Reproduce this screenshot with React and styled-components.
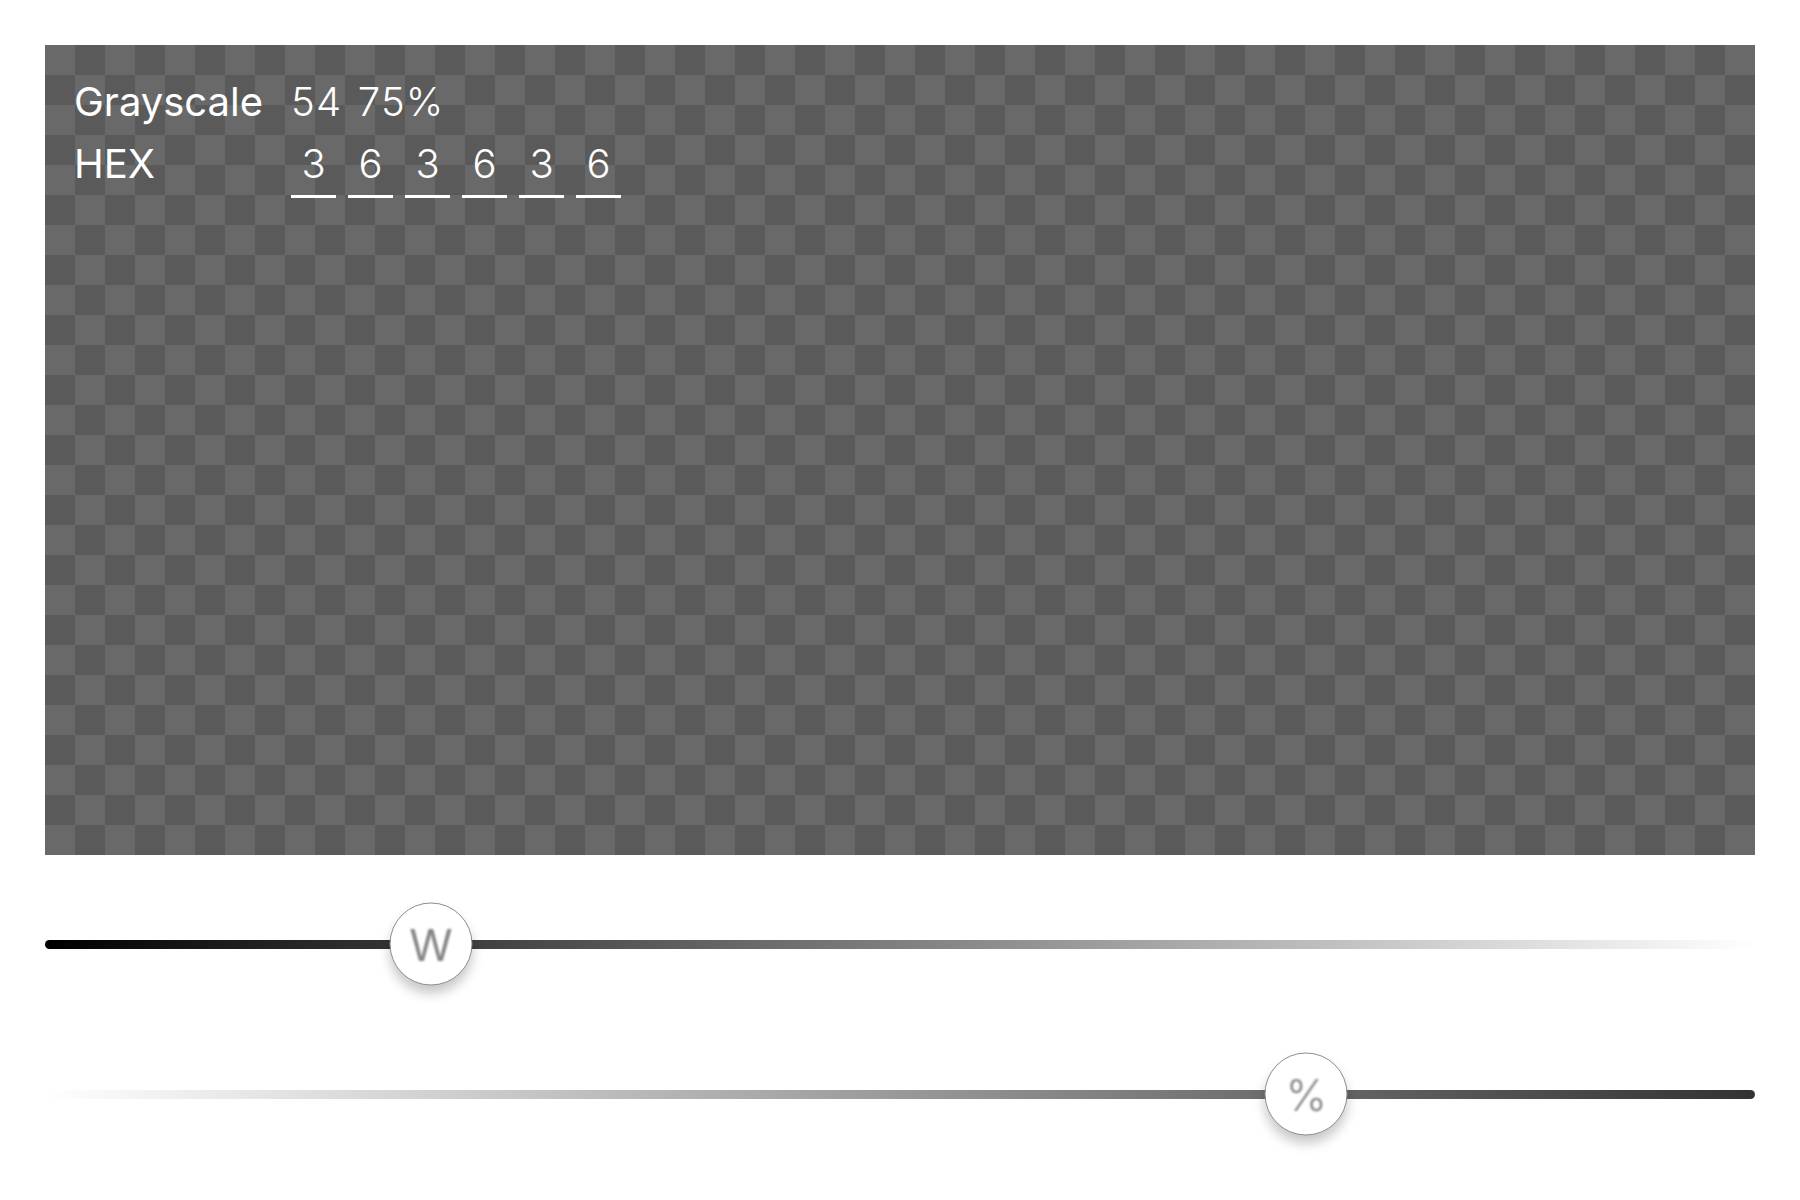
import React from 'react'
import styled, { createGlobalStyle } from 'styled-components'

const GlobalStyle = createGlobalStyle`
    html, body {
        margin: 0;
        padding: 0;
        background: #ffffff;
    }
    body {
        font-family: Inter, "Liberation Sans", sans-serif;
    }
`

const hexDigits = ['3', '6', '3', '6', '3', '6']

function Slider({ value, glyph, gradient, weight }) {
    return (
        <SliderRow>
            <Track gradient={gradient} />
            <Thumb style={{ left: `${value * 100}%` }}>
                <Glyph weight={weight}>{glyph}</Glyph>
            </Thumb>
        </SliderRow>
    )
}

function App() {
    return (
        <Page>
            <GlobalStyle />
            <Preview>
                <Info>
                    <Label>Grayscale</Label>
                    <Value>54 75%</Value>
                    <Label>HEX</Label>
                    <HexFields>
                        {hexDigits.map((d, i) => (
                            <HexCell key={i}>{d}</HexCell>
                        ))}
                    </HexFields>
                </Info>
            </Preview>
            <Sliders>
                <Slider
                    value={0.2257}
                    glyph="W"
                    weight={400}
                    gradient="linear-gradient(to right, #000000, #ffffff)"
                />
                <Slider
                    value={0.7377}
                    glyph="%"
                    weight={300}
                    gradient="linear-gradient(to right, #ffffff, #333333)"
                />
            </Sliders>
        </Page>
    )
}
export default App

const Page = styled.div`
    padding: 45px;
    width: 1710px;
`
const Preview = styled.div`
    height: 810px;
    background: repeating-conic-gradient(#5a5a5a 0 25%, #696969 0 50%) 0 0 / 60px 60px;
    padding: 33px 0 0 29px;
    box-sizing: border-box;
`
const Info = styled.div`
    display: grid;
    grid-template-columns: 217px auto;
    grid-template-rows: 48px auto;
    row-gap: 14px;
    justify-content: start;
    color: #ffffff;
    font-size: 40px;
    line-height: 48px;
`
const Label = styled.div`
    font-weight: 400;
`
const Value = styled.div`
    font-weight: 300;
    letter-spacing: 1.2px;
    word-spacing: 3px;
`
const HexFields = styled.div`
    display: flex;
    gap: 12px;
`
const HexCell = styled.div`
    width: 45px;
    text-align: center;
    font-weight: 300;
    padding-bottom: 7px;
    border-bottom: 3px solid #ffffff;
`
const Sliders = styled.div`
    margin-top: 14px;
    display: flex;
    flex-direction: column;
`
const SliderRow = styled.div`
    position: relative;
    height: 150px;
    display: flex;
    align-items: center;
`
const Track = styled.div`
    width: 100%;
    height: 9px;
    border-radius: 5px;
    background: ${props => props.gradient};
`
const Thumb = styled.div`
    position: absolute;
    top: 50%;
    width: 81px;
    height: 81px;
    transform: translate(-50%, -50%);
    border-radius: 50%;
    background: #ffffff;
    border: 1px solid #8e8e8e;
    box-shadow: 0 8px 12px rgba(0, 0, 0, 0.22);
    display: flex;
    align-items: center;
    justify-content: center;
`
const Glyph = styled.span`
    font-size: 44px;
    font-weight: ${props => props.weight};
    color: #858585;
    filter: blur(0.9px);
    line-height: 1;
`
